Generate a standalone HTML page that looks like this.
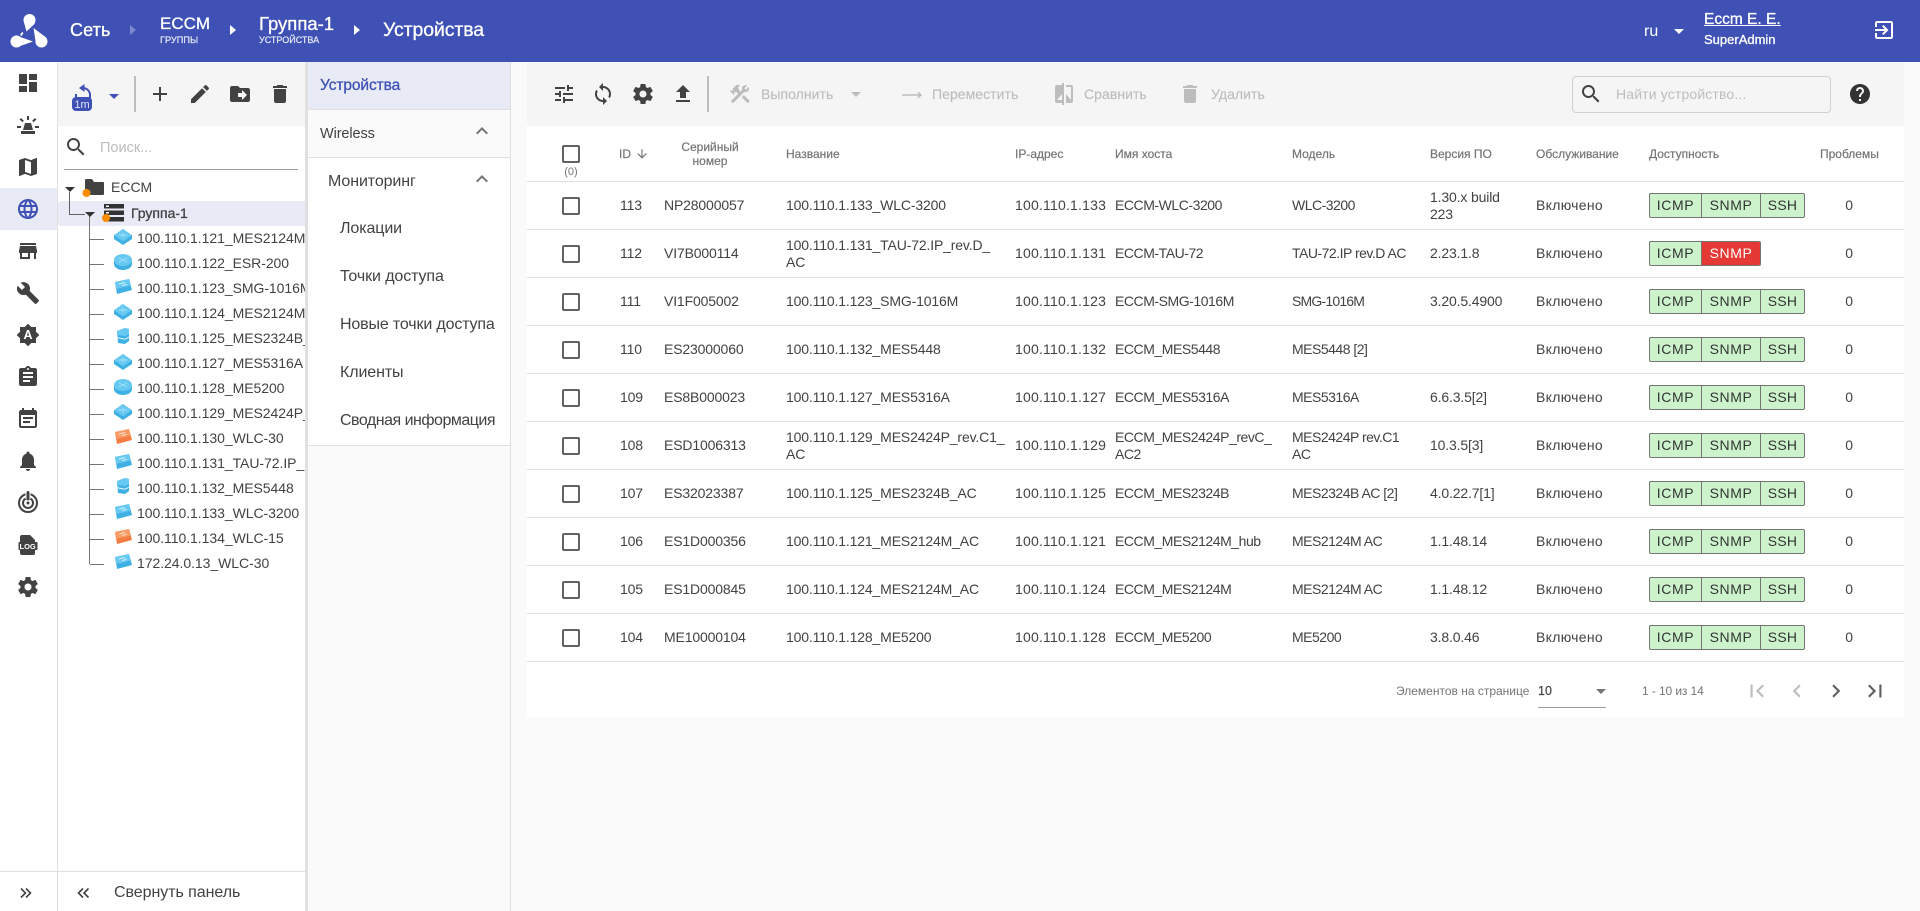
<!DOCTYPE html>
<html lang="ru"><head><meta charset="utf-8"><title>Устройства</title>
<style>
*{box-sizing:border-box}
html,body{margin:0;padding:0;width:1920px;height:911px;overflow:hidden;background:#fff;font-family:"Liberation Sans",sans-serif;color:#424242}
.a{position:absolute}
.t{position:absolute;white-space:nowrap;line-height:18px}
svg{position:absolute;display:block;overflow:visible}
.m{-webkit-text-stroke:.3px currentColor}
#tree .n{position:absolute;left:137px;font-size:14px;line-height:18px;white-space:nowrap;letter-spacing:-.05px}
.h{position:absolute;top:126px;height:55px;display:flex;align-items:center;font-size:12px;line-height:14px;color:#757575;-webkit-text-stroke:.2px #757575;letter-spacing:0}
.r{position:absolute;left:527px;width:1377px;height:48px;border-bottom:1px solid #e0e0e0;font-size:14px}
.r>div{position:absolute;top:0;height:47px;display:flex;align-items:center;line-height:17px;letter-spacing:-.15px}
.r>div:nth-child(5){letter-spacing:.2px}
.r>div:nth-child(6){letter-spacing:-.45px}
.r>div:nth-child(7){letter-spacing:-.5px;left:765px!important}
.r>div:nth-child(9){letter-spacing:.3px}
.b{left:1122px;width:auto;top:11px!important;height:25px!important;border:1px solid #757575;border-radius:2px;letter-spacing:.6px!important;color:#333;background:#cdf3cd;overflow:hidden;width:156px}
.b span{display:block;height:23px;line-height:23px;text-align:center;float:left;border-right:1px solid #757575}
.b span:last-child{border-right:0;letter-spacing:.2px}
.nv{position:absolute;font-size:16px;line-height:18px;white-space:nowrap;letter-spacing:-.1px}
.g{font-size:14px;color:#bdbdbd;letter-spacing:.05px;-webkit-text-stroke:.15px #bdbdbd}
.hw{color:#fff;-webkit-text-stroke:.3px #fff}
</style></head><body>
<svg width="0" height="0" style="position:absolute"><defs>
<symbol id="dash" viewBox="0 0 24 24"><path d="M3 13h8V3H3v10zm0 8h8v-6H3v6zm10 0h8V11h-8v10zm0-18v6h8V3h-8z"/></symbol>
<symbol id="siren" viewBox="0 0 24 24"><path d="M11 3h2v4h-2zM3.6 6.4L5 5l2.8 2.8-1.4 1.4zM16.200 7.800L19 5l1.400 1.400-2.800 2.800zM1 13h4v2H1zM19 13h4v2h-4zM9 10h6l2 7H7zM5 18h14v3H5z"/></symbol>
<symbol id="map" viewBox="0 0 24 24"><path d="M20.5 3l-.16.03L15 5.1 9 3 3.36 4.9c-.21.07-.36.25-.36.48V20.5c0 .28.22.5.5.5l.16-.03L9 18.9l6 2.1 5.64-1.9c.21-.07.36-.25.36-.48V3.5c0-.28-.22-.5-.5-.5zM15 19l-6-2.11V5l6 2.11V19z"/></symbol>
<symbol id="lang" viewBox="0 0 24 24"><path d="M11.99 2C6.47 2 2 6.48 2 12s4.47 10 9.99 10C17.52 22 22 17.52 22 12S17.52 2 11.99 2zm6.93 6h-2.95c-.32-1.25-.78-2.45-1.38-3.56 1.84.63 3.37 1.91 4.33 3.56zM12 4.04c.83 1.2 1.48 2.53 1.91 3.96h-3.82c.43-1.43 1.08-2.76 1.91-3.96zM4.26 14C4.1 13.36 4 12.69 4 12s.1-1.36.26-2h3.38c-.08.66-.14 1.32-.14 2 0 .68.06 1.34.14 2H4.26zm.82 2h2.95c.32 1.25.78 2.45 1.38 3.56-1.84-.63-3.37-1.9-4.33-3.56zm2.95-8H5.08c.96-1.66 2.49-2.93 4.33-3.56C8.81 5.55 8.35 6.75 8.03 8zM12 19.96c-.83-1.2-1.48-2.53-1.91-3.96h3.82c-.43 1.43-1.08 2.76-1.91 3.96zM14.34 14H9.66c-.09-.66-.16-1.32-.16-2 0-.68.07-1.35.16-2h4.68c.09.65.16 1.32.16 2 0 .68-.07 1.34-.16 2zm.25 5.56c.6-1.11 1.06-2.31 1.38-3.56h2.95c-.96 1.65-2.49 2.93-4.33 3.56zM16.36 14c.08-.66.14-1.32.14-2 0-.68-.06-1.34-.14-2h3.38c.16.64.26 1.31.26 2s-.1 1.36-.26 2h-3.38z"/></symbol>
<symbol id="store" viewBox="0 0 24 24"><path d="M20 4H4v2h16V4zm1 10v-2l-1-5H4l-1 5v2h1v6h10v-6h4v6h2v-6h1zm-9 4H6v-4h6v4z"/></symbol>
<symbol id="build" viewBox="0 0 24 24"><path d="M22.7 19l-9.1-9.1c.9-2.3.4-5-1.5-6.9-2-2-5-2.4-7.4-1.3L9 6 6 9 1.6 4.7C.4 7.1.9 10.1 2.9 12.1c1.9 1.9 4.6 2.4 6.9 1.5l9.1 9.1c.4.4 1 .4 1.4 0l2.3-2.3c.5-.4.5-1.1.1-1.4z"/></symbol>
<symbol id="auto" viewBox="0 0 24 24"><path d="M10.85 12.65h2.3L12 9l-1.15 3.65zM20 8.69V4h-4.69L12 .69 8.69 4H4v4.69L.69 12 4 15.31V20h4.69L12 23.31 15.31 20H20v-4.69L23.31 12 20 8.69zM14.3 16l-.7-2h-3.2l-.7 2H7.8L11 7h2l3.2 9h-1.9z"/></symbol>
<symbol id="assign" viewBox="0 0 24 24"><path d="M19 3h-4.18C14.4 1.84 13.3 1 12 1c-1.3 0-2.4.84-2.82 2H5c-1.1 0-2 .9-2 2v14c0 1.1.9 2 2 2h14c1.1 0 2-.9 2-2V5c0-1.1-.9-2-2-2zm-7 0c.55 0 1 .45 1 1s-.45 1-1 1-1-.45-1-1 .45-1 1-1zm2 14H7v-2h7v2zm3-4H7v-2h10v2zm0-4H7V7h10v2z"/></symbol>
<symbol id="event" viewBox="0 0 24 24"><path d="M17 10H7v2h10v-2zm2-7h-1V1h-2v2H8V1H6v2H5c-1.11 0-1.99.9-1.99 2L3 19c0 1.1.89 2 2 2h14c1.1 0 2-.9 2-2V5c0-1.1-.9-2-2-2zm0 16H5V8h14v11zm-5-5H7v2h7v-2z"/></symbol>
<symbol id="bell" viewBox="0 0 24 24"><path d="M12 22c1.1 0 2-.9 2-2h-4c0 1.1.89 2 2 2zm6-6v-5c0-3.07-1.64-5.64-4.5-6.32V4c0-.83-.67-1.5-1.5-1.5s-1.5.67-1.5 1.5v.68C7.63 5.36 6 7.92 6 11v5l-2 2v1h16v-1l-2-2z"/></symbol>
<symbol id="gear" viewBox="0 0 24 24"><path d="M19.43 12.98c.04-.32.07-.64.07-.98s-.03-.66-.07-.98l2.11-1.65c.19-.15.24-.42.12-.64l-2-3.46c-.12-.22-.39-.3-.61-.22l-2.49 1c-.52-.4-1.08-.73-1.69-.98l-.38-2.65C14.46 2.18 14.25 2 14 2h-4c-.25 0-.46.18-.49.42l-.38 2.65c-.61.25-1.17.59-1.69.98l-2.49-1c-.23-.09-.49 0-.61.22l-2 3.46c-.13.22-.07.49.12.64l2.11 1.65c-.04.32-.07.65-.07.98s.03.66.07.98l-2.11 1.65c-.19.15-.24.42-.12.64l2 3.46c.12.22.39.3.61.22l2.49-1c.52.4 1.08.73 1.69.98l.38 2.65c.03.24.24.42.49.42h4c.25 0 .46-.18.49-.42l.38-2.65c.61-.25 1.17-.59 1.69-.98l2.49 1c.23.09.49 0 .61-.22l2-3.46c.12-.22.07-.49-.12-.64l-2.11-1.65zM12 15.5c-1.93 0-3.5-1.57-3.5-3.5s1.57-3.5 3.5-3.5 3.5 1.57 3.5 3.5-1.57 3.5-3.5 3.5z"/></symbol>
<symbol id="tune" viewBox="0 0 24 24"><path d="M3 17v2h6v-2H3zM3 5v2h10V5H3zm10 16v-2h8v-2h-8v-2h-2v6h2zM7 9v2H3v2h4v2h2V9H7zm14 4v-2H11v2h10zm-6-4h2V7h4V5h-4V3h-2v6z"/></symbol>
<symbol id="sync" viewBox="0 0 24 24"><path d="M12 4V1L8 5l4 4V6c3.31 0 6 2.69 6 6 0 1.01-.25 1.97-.7 2.8l1.46 1.46C19.54 15.03 20 13.57 20 12c0-4.42-3.58-8-8-8zm0 14c-3.31 0-6-2.69-6-6 0-1.01.25-1.97.7-2.8L5.24 7.74C4.46 8.97 4 10.43 4 12c0 4.42 3.58 8 8 8v3l4-4-4-4v3z"/></symbol>
<symbol id="up" viewBox="0 0 24 24"><path d="M9 16h6v-6h4l-7-7-7 7h4zm-4 2h14v2H5z"/></symbol>
<symbol id="del" viewBox="0 0 24 24"><path d="M6 19c0 1.1.9 2 2 2h8c1.1 0 2-.9 2-2V7H6v12zM19 4h-3.5l-1-1h-5l-1 1H5v2h14V4z"/></symbol>
<symbol id="edit" viewBox="0 0 24 24"><path d="M3 17.25V21h3.75L17.81 9.94l-3.75-3.75L3 17.25zM20.71 7.04c.39-.39.39-1.02 0-1.41l-2.34-2.34c-.39-.39-1.02-.39-1.41 0l-1.83 1.83 3.75 3.75 1.83-1.83z"/></symbol>
<symbol id="add" viewBox="0 0 24 24"><path d="M19 13h-6v6h-2v-6H5v-2h6V5h2v6h6v2z"/></symbol>
<symbol id="fmove" viewBox="0 0 24 24"><path d="M20 6h-8l-2-2H4c-1.1 0-1.99.9-1.99 2L2 18c0 1.1.9 2 2 2h16c1.1 0 2-.9 2-2V8c0-1.1-.9-2-2-2zm-6 12v-3h-4v-4h4V8l5 5-5 5z"/></symbol>
<symbol id="search" viewBox="0 0 24 24"><path d="M15.5 14h-.79l-.28-.27C15.41 12.59 16 11.11 16 9.5 16 5.91 13.09 3 9.5 3S3 5.91 3 9.5 5.91 16 9.5 16c1.61 0 3.09-.59 4.23-1.57l.27.28v.79l5 4.99L20.49 19l-4.99-5zm-6 0C7.01 14 5 11.99 5 9.5S7.01 5 9.5 5 14 7.01 14 9.5 11.99 14 9.5 14z"/></symbol>
<symbol id="help" viewBox="0 0 24 24"><path d="M12 2C6.48 2 2 6.48 2 12s4.48 10 10 10 10-4.48 10-10S17.52 2 12 2zm1 17h-2v-2h2v2zm2.07-7.75l-.9.92C13.45 12.9 13 13.5 13 15h-2v-.5c0-1.1.45-2.1 1.17-2.83l1.24-1.26c.37-.36.59-.86.59-1.41 0-1.1-.9-2-2-2s-2 .9-2 2H8c0-2.21 1.79-4 4-4s4 1.79 4 4c0 .88-.36 1.68-.93 2.25z"/></symbol>
<symbol id="exit" viewBox="0 0 24 24"><path d="M10.09 15.59L11.5 17l5-5-5-5-1.41 1.41L12.67 11H3v2h9.67l-2.58 2.59zM19 3H5c-1.11 0-2 .9-2 2v4h2V5h14v14H5v-4H3v4c0 1.1.89 2 2 2h14c1.1 0 2-.9 2-2V5c0-1.1-.9-2-2-2z"/></symbol>
<symbol id="tools" viewBox="0 0 24 24"><path d="M13.78 15.3L19.78 21.3L21.89 19.14L15.89 13.14L13.78 15.3M17.5 10.1C17.11 10.1 16.69 10.05 16.36 9.91L4.97 21.25L2.86 19.14L10.27 11.74L8.5 9.96L7.78 10.66L6.33 9.25V12.11L5.63 12.81L2.11 9.25L2.81 8.55H5.62L4.22 7.14L7.78 3.58C8.95 2.41 10.83 2.41 12 3.58L9.89 5.74L11.3 7.14L10.59 7.85L12.38 9.63L14.2 7.75C14.06 7.42 14 7 14 6.63C14 4.66 15.56 3.11 17.5 3.11C18.09 3.11 18.61 3.25 19.08 3.53L16.41 6.2L17.91 7.7L20.58 5.03C20.86 5.5 21 6 21 6.63C21 8.55 19.45 10.1 17.5 10.1Z"/></symbol>
<symbol id="cmp" viewBox="0 0 24 24"><path d="M10 3H5c-1.1 0-2 .9-2 2v14c0 1.1.9 2 2 2h5v2h2V1h-2v2zm0 15H5l5-6v6zm9-15h-5v2h5v13l-5-6v9h5c1.1 0 2-.9 2-2V5c0-1.1-.9-2-2-2z"/></symbol>
<symbol id="first" viewBox="0 0 24 24"><path d="M18.41 16.59L13.82 12l4.59-4.59L17 6l-6 6 6 6zM6 6h2v12H6z"/></symbol>
<symbol id="last" viewBox="0 0 24 24"><path d="M5.59 7.41L10.18 12l-4.59 4.59L7 18l6-6-6-6zM16 6h2v12h-2z"/></symbol>
<symbol id="prev" viewBox="0 0 24 24"><path d="M15.41 7.41L14 6l-6 6 6 6 1.41-1.41L10.83 12z"/></symbol>
<symbol id="next" viewBox="0 0 24 24"><path d="M10 6L8.59 7.41 13.17 12l-4.58 4.59L10 18l6-6z"/></symbol>
<symbol id="down" viewBox="0 0 24 24"><path d="M20 12l-1.41-1.41L13 16.17V4h-2v12.17l-5.58-5.59L4 12l8 8 8-8z"/></symbol>
<symbol id="less" viewBox="0 0 24 24"><path d="M12 8l-6 6 1.41 1.41L12 10.83l4.59 4.58L18 14z"/></symbol>
<symbol id="dD" viewBox="0 0 18 16"><path d="M9 0l9 6.200V10l-9 6-9-6V6.200z" fill="#3eb0e4"/><path d="M9 0l9 6.200-9 6-9-6z" fill="#67c9f1"/><path d="M5 6h8M9 3.500v5" stroke="#a8e2f8" stroke-width=".9"/></symbol>
<symbol id="dR" viewBox="0 0 18 16"><ellipse cx="9" cy="10" rx="9" ry="6" fill="#3eb0e4"/><rect y="6" width="18" height="4" fill="#3eb0e4"/><ellipse cx="9" cy="6" rx="9" ry="6" fill="#67c9f1"/><path d="M5 4l8 4M13 4L5 8" stroke="#a8e2f8" stroke-width=".9"/></symbol>
<symbol id="dB" viewBox="0 0 18 16"><path d="M1 3L15 0l3 11-15 4z" fill="#3eb0e4"/><path d="M1 3L15 0l2 6.500-15 3.500z" fill="#67c9f1"/><path d="M5 5l6-1.500M8 6.500l5-1.200" stroke="#d0f0fb" stroke-width="1"/></symbol>
<symbol id="dO" viewBox="0 0 18 16"><path d="M1 3L15 0l3 11-15 4z" fill="#f47d43"/><path d="M1 3L15 0l2 6.500-15 3.500z" fill="#fb9c66"/><path d="M5 5l6-1.500M8 6.500l5-1.200" stroke="#fde0cc" stroke-width="1"/></symbol>
<symbol id="dS" viewBox="0 0 18 16"><path d="M3 3l8-3 4 1v12l-4 3-7-1z" fill="#3eb0e4"/><path d="M3 3l8-3 4 1v5l-4 2-8-1z" fill="#67c9f1"/><path d="M3.500 9.800l7.500 1.400 4-2" stroke="#e4f6fc" fill="none" stroke-width="1"/></symbol>
</defs></svg>

<!-- header -->
<div class="a" style="left:0;top:0;width:1920px;height:62px;background:#3f51b5"></div>
<svg style="left:0;top:0" width="60" height="60" fill="#fff"><circle cx="29.500" cy="20" r="6"/><circle cx="16.500" cy="41.500" r="6"/><circle cx="41.500" cy="41.500" r="6"/><path d="M24 22.500l11 1-8.500 8zM16 35.500l17 6-17 6zM36 44.500l9.500-7.500-12-9zM22 32l1.500 1-2 3-1.500-1z"/></svg>
<div class="t hw" style="left:70px;top:21px;font-size:18px;letter-spacing:.1px">Сеть</div>
<svg style="left:128px;top:24px;fill:#7b89cf" width="12" height="12"><path d="M2 1l6 5-6 5z"/></svg>
<div class="t hw" style="left:160px;top:15px;font-size:17px">ECCM</div>
<div class="t" style="left:160px;top:31px;font-size:9.200px;color:#e8eaf6;-webkit-text-stroke:.2px #e8eaf6">ГРУППЫ</div>
<svg style="left:228px;top:24px;fill:#fff" width="12" height="12"><path d="M2 1l6 5-6 5z"/></svg>
<div class="t hw" style="left:259px;top:15px;font-size:18.500px">Группа-1</div>
<div class="t" style="left:259px;top:31px;font-size:9px;color:#e8eaf6;-webkit-text-stroke:.2px #e8eaf6">УСТРОЙСТВА</div>
<svg style="left:352px;top:24px;fill:#fff" width="12" height="12"><path d="M2 1l6 5-6 5z"/></svg>
<div class="t hw" style="left:383px;top:21px;font-size:19.500px;letter-spacing:-.1px">Устройства</div>
<div class="t" style="left:1644px;top:23px;font-size:16px;color:#fff">ru</div>
<svg style="left:1674px;top:29px;fill:#fff" width="10" height="6"><path d="M0 0h10L5 5z"/></svg>
<div class="t hw" style="left:1704px;top:11px;font-size:15.500px;text-decoration:underline">Eccm E. E.</div>
<div class="t hw" style="left:1704px;top:31px;font-size:13px">SuperAdmin</div>
<svg style="left:1872px;top:18px;fill:#fff" width="24" height="24"><use href="#exit"/></svg>

<!-- rail -->
<div class="a" style="left:57px;top:62px;width:1px;height:849px;background:#e0e0e0"></div>
<div class="a" style="left:0;top:188px;width:57px;height:42px;background:#e8eaf6"></div>
<svg style="left:16px;top:71px;fill:#424242" width="24" height="24"><use href="#dash"/></svg>
<svg style="left:16px;top:113px;fill:#424242" width="24" height="24"><use href="#siren"/></svg>
<svg style="left:16px;top:155px;fill:#424242" width="24" height="24"><use href="#map"/></svg>
<svg style="left:16px;top:197px;fill:#3f51b5" width="24" height="24"><use href="#lang"/></svg>
<svg style="left:16px;top:239px;fill:#424242" width="24" height="24"><use href="#store"/></svg>
<svg style="left:16px;top:281px;fill:#424242" width="24" height="24"><use href="#build"/></svg>
<svg style="left:16px;top:323px;fill:#424242" width="24" height="24"><use href="#auto"/></svg>
<svg style="left:16px;top:365px;fill:#424242" width="24" height="24"><use href="#assign"/></svg>
<svg style="left:16px;top:407px;fill:#424242" width="24" height="24"><use href="#event"/></svg>
<svg style="left:16px;top:449px;fill:#424242" width="24" height="24"><use href="#bell"/></svg>
<svg style="left:16px;top:491px" width="24" height="24" fill="none" stroke="#424242"><circle cx="12" cy="12" r="9" stroke-width="2"/><circle cx="12" cy="12" r="5" stroke-width="2"/><circle cx="12" cy="12" r="1.500" fill="#424242" stroke="none"/><path d="M12 0v8" stroke-width="5" stroke="#fff"/><path d="M12 1.500v6.500" stroke-width="3" stroke-linecap="round"/></svg>
<svg style="left:16px;top:533px" width="24" height="24"><path d="M6 2h8l5 5v13a2 2 0 0 1-2 2H6a2 2 0 0 1-2-2V4a2 2 0 0 1 2-2z" fill="#424242"/><rect x="2.500" y="9" width="19" height="8" rx="1" fill="#424242"/><text x="3.500" y="15.800" font-size="7.500" font-weight="700" fill="#fff" font-family="Liberation Sans">LOG</text></svg>
<svg style="left:16px;top:575px;fill:#424242" width="24" height="24"><use href="#gear"/></svg>
<div class="a" style="left:0;top:871px;width:305px;height:1px;background:#e0e0e0"></div>
<svg style="left:18px;top:884px" width="16" height="18" fill="none" stroke="#424242" stroke-width="1.600"><path d="M3 4.500l4.500 4.500-4.500 4.500M8 4.500l4.500 4.500L8 13.500"/></svg>

<!-- tree -->
<div class="a" style="left:58px;top:62px;width:247px;height:64px;background:#f5f5f5"></div>
<svg style="left:70px;top:82px" width="24" height="30"><path d="M6 17v-5" fill="none" stroke="#3f51b5" stroke-width="2"/><path d="M13 6a7 7 0 0 1 7 7v4" fill="none" stroke="#3f51b5" stroke-width="2"/><path d="M14.500 2L9 6l5.500 4z" fill="#3f51b5"/><rect x="2" y="15" width="20" height="14" rx="4" fill="#3f51b5"/><text x="12" y="26" text-anchor="middle" font-size="11" fill="#dfe3f6" font-family="Liberation Sans">1m</text></svg>
<svg style="left:109px;top:94px;fill:#3f51b5" width="10" height="6"><path d="M0 0h10L5 5z"/></svg>
<div class="a" style="left:134px;top:76px;width:2px;height:36px;background:#bdbdbd"></div>
<svg style="left:148px;top:82px;fill:#424242" width="24" height="24"><use href="#add"/></svg>
<svg style="left:188px;top:82px;fill:#424242" width="24" height="24"><use href="#edit"/></svg>
<svg style="left:228px;top:82px;fill:#424242" width="24" height="24"><use href="#fmove"/></svg>
<svg style="left:268px;top:82px;fill:#424242" width="24" height="24"><use href="#del"/></svg>
<svg style="left:64px;top:135px;fill:#424242" width="24" height="24"><use href="#search"/></svg>
<div class="t" style="left:100px;top:139px;font-size:14.500px;color:#bdbdbd">Поиск...</div>
<div class="a" style="left:64px;top:169px;width:234px;height:1px;background:#9e9e9e"></div>

<div class="a" style="left:58px;top:201px;width:247px;height:25px;background:#e8eaf6;border-radius:3px 0 0 3px"></div>
<div class="a" style="left:69px;top:192px;width:1px;height:23px;background:#616161"></div>
<div class="a" style="left:69px;top:214px;width:16px;height:1px;background:#616161"></div>
<svg style="left:65px;top:187px;fill:#333" width="11" height="6"><path d="M0 0h10L5 5z"/></svg>
<svg style="left:84px;top:178px" width="22" height="20" fill="#424242"><path d="M2 1h6l2 3h9a1 1 0 0 1 1 1v11a1 1 0 0 1-1 1H1V2z"/><circle cx="2.500" cy="15" r="4" fill="#fb8c00"/></svg>
<div class="t" style="left:111px;top:178px;font-size:14px">ECCM</div>
<div class="a" style="left:89px;top:216px;width:1px;height:348px;background:#757575"></div>
<svg style="left:85px;top:212px;fill:#333" width="11" height="6"><path d="M0 0h10L5 5z"/></svg>
<svg style="left:100px;top:203px" width="26" height="20"><path d="M4 1h20v4.500H4zM4 7.500h20V12H4zM4 14h20v4.500H4z" fill="#333"/><path d="M6 2.500h3v1.500H6zM6 9h3v1.500H6z" fill="#fff"/><circle cx="6" cy="15" r="4" fill="#fb8c00"/></svg>
<div class="t m" style="left:131px;top:204px;font-size:14px;letter-spacing:0">Группа-1</div>

<div id="tree" class="a" style="left:0;top:0;width:305px;height:600px;overflow:hidden">
<div class="a" style="left:90px;top:239px;width:14px;height:1px;background:#757575"></div><svg style="left:114px;top:229px" width="18" height="16"><use href="#dD"/></svg><div class="n" style="top:229px">100.110.1.121_MES2124M_AC</div>
<div class="a" style="left:90px;top:264px;width:14px;height:1px;background:#757575"></div><svg style="left:114px;top:254px" width="18" height="16"><use href="#dR"/></svg><div class="n" style="top:254px">100.110.1.122_ESR-200</div>
<div class="a" style="left:90px;top:289px;width:14px;height:1px;background:#757575"></div><svg style="left:114px;top:279px" width="18" height="16"><use href="#dB"/></svg><div class="n" style="top:279px">100.110.1.123_SMG-1016M</div>
<div class="a" style="left:90px;top:314px;width:14px;height:1px;background:#757575"></div><svg style="left:114px;top:304px" width="18" height="16"><use href="#dD"/></svg><div class="n" style="top:304px">100.110.1.124_MES2124M_AC</div>
<div class="a" style="left:90px;top:339px;width:14px;height:1px;background:#757575"></div><svg style="left:114px;top:328px" width="18" height="16"><use href="#dS"/></svg><div class="n" style="top:329px">100.110.1.125_MES2324B_AC</div>
<div class="a" style="left:90px;top:364px;width:14px;height:1px;background:#757575"></div><svg style="left:114px;top:354px" width="18" height="16"><use href="#dD"/></svg><div class="n" style="top:354px">100.110.1.127_MES5316A</div>
<div class="a" style="left:90px;top:389px;width:14px;height:1px;background:#757575"></div><svg style="left:114px;top:379px" width="18" height="16"><use href="#dR"/></svg><div class="n" style="top:379px">100.110.1.128_ME5200</div>
<div class="a" style="left:90px;top:414px;width:14px;height:1px;background:#757575"></div><svg style="left:114px;top:404px" width="18" height="16"><use href="#dD"/></svg><div class="n" style="top:404px">100.110.1.129_MES2424P_rev.C1_AC</div>
<div class="a" style="left:90px;top:439px;width:14px;height:1px;background:#757575"></div><svg style="left:114px;top:429px" width="18" height="16"><use href="#dO"/></svg><div class="n" style="top:429px">100.110.1.130_WLC-30</div>
<div class="a" style="left:90px;top:464px;width:14px;height:1px;background:#757575"></div><svg style="left:114px;top:454px" width="18" height="16"><use href="#dB"/></svg><div class="n" style="top:454px">100.110.1.131_TAU-72.IP_rev.D_AC</div>
<div class="a" style="left:90px;top:489px;width:14px;height:1px;background:#757575"></div><svg style="left:114px;top:478px" width="18" height="16"><use href="#dS"/></svg><div class="n" style="top:479px">100.110.1.132_MES5448</div>
<div class="a" style="left:90px;top:514px;width:14px;height:1px;background:#757575"></div><svg style="left:114px;top:504px" width="18" height="16"><use href="#dB"/></svg><div class="n" style="top:504px">100.110.1.133_WLC-3200</div>
<div class="a" style="left:90px;top:539px;width:14px;height:1px;background:#757575"></div><svg style="left:114px;top:529px" width="18" height="16"><use href="#dO"/></svg><div class="n" style="top:529px">100.110.1.134_WLC-15</div>
<div class="a" style="left:90px;top:564px;width:14px;height:1px;background:#757575"></div><svg style="left:114px;top:554px" width="18" height="16"><use href="#dB"/></svg><div class="n" style="top:554px">172.24.0.13_WLC-30</div>
</div>
<svg style="left:76px;top:884px" width="16" height="18" fill="none" stroke="#424242" stroke-width="1.600"><path d="M7 4.500L2.500 9 7 13.500M12.500 4.500L8 9l4.500 4.500"/></svg>
<div class="t" style="left:114px;top:884px;font-size:16px;letter-spacing:-.05px">Свернуть панель</div>

<!-- divider + subnav -->
<div class="a" style="left:305px;top:62px;width:3px;height:849px;background:#e0e0e0"></div>
<div class="a" style="left:308px;top:62px;width:202px;height:849px;background:#fafafa"></div>
<div class="a" style="left:510px;top:62px;width:1px;height:849px;background:#e0e0e0"></div>
<div class="a" style="left:308px;top:62px;width:202px;height:48px;background:#e8eaf6;border-bottom:1px solid #e0e0e0"></div>
<div class="a" style="left:308px;top:110px;width:202px;height:48px;border-bottom:1px solid #e0e0e0"></div>
<div class="a" style="left:308px;top:158px;width:202px;height:288px;background:#fff;border-bottom:1px solid #e0e0e0"></div>
<div class="nv m" style="left:320px;top:77px;color:#3f51b5;font-size:15.500px">Устройства</div>
<div class="nv" style="left:320px;top:125px;font-size:14.500px">Wireless</div>
<svg style="left:470px;top:119px;fill:#757575" width="24" height="24"><use href="#less"/></svg>
<div class="nv" style="left:328px;top:173px">Мониторинг</div>
<svg style="left:470px;top:167px;fill:#757575" width="24" height="24"><use href="#less"/></svg>
<div class="nv" style="left:340px;top:220px">Локации</div>
<div class="nv" style="left:340px;top:268px">Точки доступа</div>
<div class="nv" style="left:340px;top:316px;letter-spacing:-.15px">Новые точки доступа</div>
<div class="nv" style="left:340px;top:364px">Клиенты</div>
<div class="nv" style="left:340px;top:412px;letter-spacing:-.5px">Сводная информация</div>

<!-- main -->
<div class="a" style="left:511px;top:62px;width:1409px;height:849px;background:#fafafa"></div>
<div class="a" style="left:527px;top:62px;width:1377px;height:64px;background:#f5f5f5"></div>
<div class="a" style="left:527px;top:126px;width:1377px;height:591px;background:#fff"></div>
<svg style="left:552px;top:82px;fill:#424242" width="24" height="24"><use href="#tune"/></svg>
<svg style="left:591px;top:82px;fill:#424242" width="24" height="24"><use href="#sync"/></svg>
<svg style="left:631px;top:82px;fill:#424242" width="24" height="24"><use href="#gear"/></svg>
<svg style="left:671px;top:82px;fill:#424242" width="24" height="24"><use href="#up"/></svg>
<div class="a" style="left:707px;top:76px;width:2px;height:36px;background:#bdbdbd"></div>
<svg style="left:728px;top:82px;fill:#bdbdbd" width="24" height="24"><use href="#tools"/></svg>
<div class="t g" style="left:761px;top:85px">Выполнить</div>
<svg style="left:851px;top:92px;fill:#bdbdbd" width="10" height="6"><path d="M0 0h10L5 5z"/></svg>
<svg style="left:901px;top:90px" width="22" height="10" fill="none" stroke="#bdbdbd" stroke-width="1.500"><path d="M1 5h19M17 2.500l3 2.500-3 2.500"/></svg>
<div class="t g" style="left:932px;top:85px">Переместить</div>
<svg style="left:1052px;top:82px;fill:#bdbdbd" width="24" height="24"><use href="#cmp"/></svg>
<div class="t g" style="left:1084px;top:85px">Сравнить</div>
<svg style="left:1178px;top:82px;fill:#bdbdbd" width="24" height="24"><use href="#del"/></svg>
<div class="t g" style="left:1211px;top:85px">Удалить</div>
<div class="a" style="left:1572px;top:76px;width:259px;height:37px;border:1px solid #d0d0d0;border-radius:4px"></div>
<svg style="left:1579px;top:82px;fill:#424242" width="24" height="24"><use href="#search"/></svg>
<div class="t" style="left:1616px;top:85px;font-size:14px;color:#bdbdbd;letter-spacing:.15px">Найти устройство...</div>
<svg style="left:1848px;top:82px;fill:#333" width="24" height="24"><use href="#help"/></svg>

<!-- table header -->
<div class="a" style="left:562px;top:145px;width:18px;height:18px;border:2px solid #616161;border-radius:2px"></div>
<div class="t" style="left:562px;top:163px;width:18px;text-align:center;font-size:11px;color:#757575">(0)</div>
<div class="h" style="left:619px">ID</div>
<svg style="left:635px;top:147px;fill:#757575" width="14" height="14" viewBox="0 0 24 24"><use href="#down"/></svg>
<div class="h" style="left:670px;width:80px;justify-content:center;text-align:center">Серийный<br>номер</div>
<div class="h" style="left:786px">Название</div>
<div class="h" style="left:1015px">IP-адрес</div>
<div class="h" style="left:1115px">Имя хоста</div>
<div class="h" style="left:1292px">Модель</div>
<div class="h" style="left:1430px">Версия ПО</div>
<div class="h" style="left:1536px">Обслуживание</div>
<div class="h" style="left:1649px">Доступность</div>
<div class="h" style="left:1820px">Проблемы</div>
<div class="a" style="left:527px;top:181px;width:1377px;height:1px;background:#e0e0e0"></div>

<!-- rows -->
<div class="r" style="top:182px"><div style="left:35px"><i class="a" style="left:0;top:15px;width:18px;height:18px;border:2px solid #616161;border-radius:2px"></i></div><div style="left:93px">113</div><div style="left:137px">NP28000057</div><div style="left:259px;width:205px">100.110.1.133_WLC-3200</div><div style="left:488px">100.110.1.133</div><div style="left:588px;width:170px">ECCM-WLC-3200</div><div style="left:766px;width:130px">WLC-3200</div><div style="left:903px;width:90px">1.30.x build 223</div><div style="left:1009px">Включено</div><div class="b"><span style="width:52px">ICMP</span><span style="width:59px">SNMP</span><span style="width:43px">SSH</span></div><div style="left:1322px;width:0;justify-content:center">0</div></div>
<div class="r" style="top:230px"><div style="left:35px"><i class="a" style="left:0;top:15px;width:18px;height:18px;border:2px solid #616161;border-radius:2px"></i></div><div style="left:93px">112</div><div style="left:137px">VI7B000114</div><div style="left:259px;width:205px">100.110.1.131_TAU-72.IP_rev.D_<br>AC</div><div style="left:488px">100.110.1.131</div><div style="left:588px;width:170px">ECCM-TAU-72</div><div style="left:766px;width:137px">TAU-72.IP rev.D AC</div><div style="left:903px;width:90px">2.23.1.8</div><div style="left:1009px">Включено</div><div class="b" style="width:112px"><span style="width:52px">ICMP</span><span style="width:58px;background:#e53935;color:#fff;border-right:0;letter-spacing:.6px">SNMP</span></div><div style="left:1322px;width:0;justify-content:center">0</div></div>
<div class="r" style="top:278px"><div style="left:35px"><i class="a" style="left:0;top:15px;width:18px;height:18px;border:2px solid #616161;border-radius:2px"></i></div><div style="left:93px">111</div><div style="left:137px">VI1F005002</div><div style="left:259px;width:205px">100.110.1.123_SMG-1016M</div><div style="left:488px">100.110.1.123</div><div style="left:588px;width:170px">ECCM-SMG-1016M</div><div style="left:766px;width:130px;letter-spacing:-.8px">SMG-1016M</div><div style="left:903px;width:90px">3.20.5.4900</div><div style="left:1009px">Включено</div><div class="b"><span style="width:52px">ICMP</span><span style="width:59px">SNMP</span><span style="width:43px">SSH</span></div><div style="left:1322px;width:0;justify-content:center">0</div></div>
<div class="r" style="top:326px"><div style="left:35px"><i class="a" style="left:0;top:15px;width:18px;height:18px;border:2px solid #616161;border-radius:2px"></i></div><div style="left:93px">110</div><div style="left:137px">ES23000060</div><div style="left:259px;width:205px">100.110.1.132_MES5448</div><div style="left:488px">100.110.1.132</div><div style="left:588px;width:170px">ECCM_MES5448</div><div style="left:766px;width:130px">MES5448 [2]</div><div style="left:903px;width:90px"></div><div style="left:1009px">Включено</div><div class="b"><span style="width:52px">ICMP</span><span style="width:59px">SNMP</span><span style="width:43px">SSH</span></div><div style="left:1322px;width:0;justify-content:center">0</div></div>
<div class="r" style="top:374px"><div style="left:35px"><i class="a" style="left:0;top:15px;width:18px;height:18px;border:2px solid #616161;border-radius:2px"></i></div><div style="left:93px">109</div><div style="left:137px">ES8B000023</div><div style="left:259px;width:205px">100.110.1.127_MES5316A</div><div style="left:488px">100.110.1.127</div><div style="left:588px;width:170px">ECCM_MES5316A</div><div style="left:766px;width:130px">MES5316A</div><div style="left:903px;width:90px">6.6.3.5[2]</div><div style="left:1009px">Включено</div><div class="b"><span style="width:52px">ICMP</span><span style="width:59px">SNMP</span><span style="width:43px">SSH</span></div><div style="left:1322px;width:0;justify-content:center">0</div></div>
<div class="r" style="top:422px"><div style="left:35px"><i class="a" style="left:0;top:15px;width:18px;height:18px;border:2px solid #616161;border-radius:2px"></i></div><div style="left:93px">108</div><div style="left:137px">ESD1006313</div><div style="left:259px;width:205px">100.110.1.129_MES2424P_rev.C1_<br>AC</div><div style="left:488px">100.110.1.129</div><div style="left:588px;width:175px">ECCM_MES2424P_revC_<br>AC2</div><div style="left:766px;width:130px">MES2424P rev.C1<br>AC</div><div style="left:903px;width:90px">10.3.5[3]</div><div style="left:1009px">Включено</div><div class="b"><span style="width:52px">ICMP</span><span style="width:59px">SNMP</span><span style="width:43px">SSH</span></div><div style="left:1322px;width:0;justify-content:center">0</div></div>
<div class="r" style="top:470px"><div style="left:35px"><i class="a" style="left:0;top:15px;width:18px;height:18px;border:2px solid #616161;border-radius:2px"></i></div><div style="left:93px">107</div><div style="left:137px">ES32023387</div><div style="left:259px;width:205px">100.110.1.125_MES2324B_AC</div><div style="left:488px">100.110.1.125</div><div style="left:588px;width:170px">ECCM_MES2324B</div><div style="left:766px;width:130px">MES2324B AC [2]</div><div style="left:903px;width:90px">4.0.22.7[1]</div><div style="left:1009px">Включено</div><div class="b"><span style="width:52px">ICMP</span><span style="width:59px">SNMP</span><span style="width:43px">SSH</span></div><div style="left:1322px;width:0;justify-content:center">0</div></div>
<div class="r" style="top:518px"><div style="left:35px"><i class="a" style="left:0;top:15px;width:18px;height:18px;border:2px solid #616161;border-radius:2px"></i></div><div style="left:93px">106</div><div style="left:137px">ES1D000356</div><div style="left:259px;width:205px">100.110.1.121_MES2124M_AC</div><div style="left:488px">100.110.1.121</div><div style="left:588px;width:170px">ECCM_MES2124M_hub</div><div style="left:766px;width:130px">MES2124M AC</div><div style="left:903px;width:90px">1.1.48.14</div><div style="left:1009px">Включено</div><div class="b"><span style="width:52px">ICMP</span><span style="width:59px">SNMP</span><span style="width:43px">SSH</span></div><div style="left:1322px;width:0;justify-content:center">0</div></div>
<div class="r" style="top:566px"><div style="left:35px"><i class="a" style="left:0;top:15px;width:18px;height:18px;border:2px solid #616161;border-radius:2px"></i></div><div style="left:93px">105</div><div style="left:137px">ES1D000845</div><div style="left:259px;width:205px">100.110.1.124_MES2124M_AC</div><div style="left:488px">100.110.1.124</div><div style="left:588px;width:170px">ECCM_MES2124M</div><div style="left:766px;width:130px">MES2124M AC</div><div style="left:903px;width:90px">1.1.48.12</div><div style="left:1009px">Включено</div><div class="b"><span style="width:52px">ICMP</span><span style="width:59px">SNMP</span><span style="width:43px">SSH</span></div><div style="left:1322px;width:0;justify-content:center">0</div></div>
<div class="r" style="top:614px"><div style="left:35px"><i class="a" style="left:0;top:15px;width:18px;height:18px;border:2px solid #616161;border-radius:2px"></i></div><div style="left:93px">104</div><div style="left:137px">ME10000104</div><div style="left:259px;width:205px">100.110.1.128_ME5200</div><div style="left:488px">100.110.1.128</div><div style="left:588px;width:170px">ECCM_ME5200</div><div style="left:766px;width:130px">ME5200</div><div style="left:903px;width:90px">3.8.0.46</div><div style="left:1009px">Включено</div><div class="b"><span style="width:52px">ICMP</span><span style="width:59px">SNMP</span><span style="width:43px">SSH</span></div><div style="left:1322px;width:0;justify-content:center">0</div></div>

<!-- footer -->
<div class="t" style="left:1396px;top:682px;font-size:12px;color:#757575;letter-spacing:0">Элементов на странице</div>
<div class="t" style="left:1538px;top:682px;font-size:12.500px;color:#424242;-webkit-text-stroke:.2px #424242">10</div>
<svg style="left:1596px;top:689px;fill:#757575" width="10" height="6"><path d="M0 0h10L5 5z"/></svg>
<div class="a" style="left:1538px;top:707px;width:68px;height:1px;background:#9e9e9e"></div>
<div class="t" style="left:1642px;top:682px;font-size:12px;color:#757575;letter-spacing:-.1px">1 - 10 из 14</div>
<svg style="left:1744px;top:678px;fill:#bdbdbd" width="26" height="26" viewBox="0 0 24 24"><use href="#first"/></svg>
<svg style="left:1784px;top:678px;fill:#bdbdbd" width="26" height="26" viewBox="0 0 24 24"><use href="#prev"/></svg>
<svg style="left:1823px;top:678px;fill:#616161" width="26" height="26" viewBox="0 0 24 24"><use href="#next"/></svg>
<svg style="left:1862px;top:678px;fill:#616161" width="26" height="26" viewBox="0 0 24 24"><use href="#last"/></svg>
</body></html>
